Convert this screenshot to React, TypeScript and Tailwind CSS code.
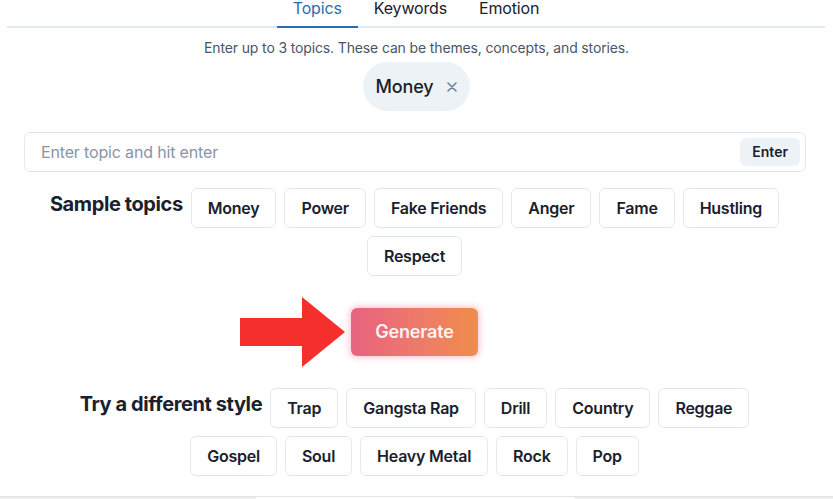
import React from "react";

const sample = ["Money", "Power", "Fake Friends", "Anger", "Fame", "Hustling", "Respect"];
const styles = ["Trap", "Gangsta Rap", "Drill", "Country", "Reggae", "Gospel", "Soul", "Heavy Metal", "Rock", "Pop"];

function Chip({ label }: { label: string }) {
  return (
    <button className="h-10 px-4 rounded-md border border-[#e2e8f0] bg-white text-base font-semibold tracking-[-0.015em] text-[#1a202c] leading-6">
      {label}
    </button>
  );
}

function Row({ title, items }: { title: string; items: string[] }) {
  return (
    <div className="max-w-[760px] mx-auto flex flex-wrap justify-center items-start gap-2">
      <h2 className="text-xl font-bold leading-6 mt-1 tracking-[-0.02em] text-[#1a202c]">{title}</h2>
      {items.map((t) => (
        <Chip key={t} label={t} />
      ))}
    </div>
  );
}

export default function App() {
  return (
    <div className="w-[833px] h-[499px] overflow-hidden bg-white font-['Inter',sans-serif] text-[#1a202c] flex flex-col">
      {/* Tabs */}
      <div className="ml-[7px] mr-[8px] -mt-[4px] flex justify-center border-b-2 border-[#e2e8f0]">
        <div className="px-4 pb-[6px] -mb-[2px] border-b-2 border-[#2b6cb0] text-base leading-6 tracking-[-0.01em] text-[#2b6cb0]">Topics</div>
        <div className="px-4 pb-[6px] -mb-[2px] border-b-2 border-transparent text-base leading-6 tracking-[-0.01em] text-[#1a202c]">Keywords</div>
        <div className="px-4 pb-[6px] -mb-[2px] border-b-2 border-transparent text-base leading-6 tracking-[-0.01em] text-[#1a202c]">Emotion</div>
      </div>

      <p className="mt-[10px] text-center text-sm leading-5 tracking-[-0.01em] text-[#4a5568]">
        Enter up to 3 topics. These can be themes, concepts, and stories.
      </p>

      <div className="mt-1 flex justify-center">
        <div className="h-[49px] pl-[13px] pr-[13px] rounded-full bg-[#edf2f7] flex items-center gap-[14px]">
          <span className="text-lg font-medium tracking-[-0.01em] text-[#1a202c]">Money</span>
          <svg width="10" height="10" viewBox="0 0 10 10" className="mt-[1px]">
            <path d="M1 1 L9 9 M9 1 L1 9" stroke="#718096" strokeWidth="1.6" strokeLinecap="round" />
          </svg>
        </div>
      </div>

      <div className="pl-6 pr-[27px] mt-[21px]">
        <div className="h-10 w-full rounded-md border border-[#e2e8f0] flex items-center pl-4 pr-[5px]">
          <span className="flex-1 text-base tracking-[-0.01em] text-[#8a94a6]">Enter topic and hit enter</span>
          <button className="h-7 px-3 rounded-md bg-[#edf2f7] text-sm font-semibold text-[#1a202c]">Enter</button>
        </div>
      </div>

      <div className="mt-4 pl-[22px] pr-[26px]">
        <Row title="Sample topics" items={sample} />
      </div>

      <div className="mt-8 flex justify-center pr-1">
        <div className="relative">
          <svg
            className="absolute left-[-111px] top-[-11px]"
            width="106"
            height="71"
            viewBox="0 0 106 71"
          >
            <polygon points="0,21 62,21 62,0 105,35 62,70 62,49 0,49" fill="#f52f2b" />
          </svg>
          <button className="h-12 px-6 rounded-md text-lg font-semibold tracking-[-0.01em] text-[#fff3f3] bg-[linear-gradient(90deg,#e8637f,#ee7a6a_55%,#f08d4a)] shadow-[0_0_6px_2px_rgba(240,110,140,0.35)]">
            Generate
          </button>
        </div>
      </div>

      <div className="mt-8 pl-[22px] pr-[26px]">
        <Row title="Try a different style" items={styles} />
      </div>

      <div className="mt-5 h-[20px] border-t border-[#e4e4e4] bg-[#efefef] shrink-0">
        <div className="ml-[256px] w-[318px] h-full bg-white"></div>
      </div>
    </div>
  );
}
